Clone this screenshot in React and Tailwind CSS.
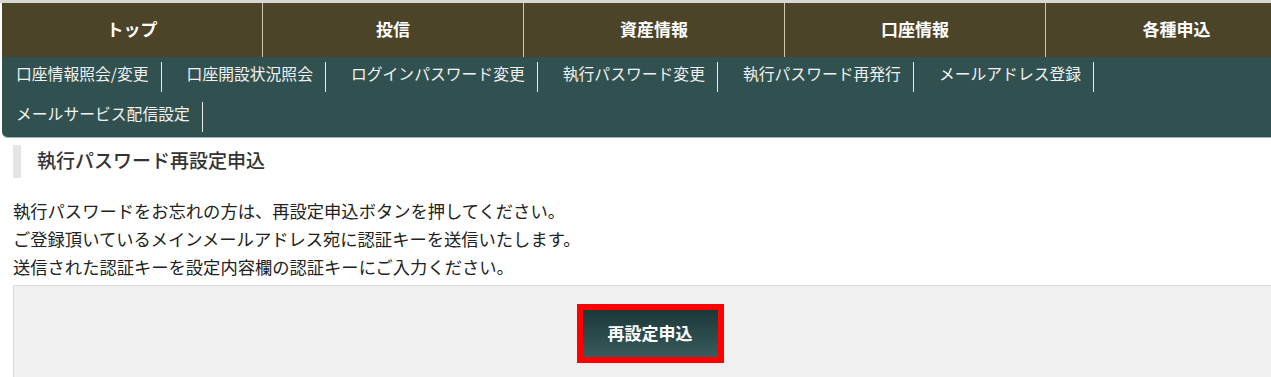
import React from 'react';

const topMenu = ['トップ', '投信', '資産情報', '口座情報', '各種申込'];

const subRows = [
  ['口座情報照会/変更', '口座開設状況照会', 'ログインパスワード変更', '執行パスワード変更', '執行パスワード再発行', 'メールアドレス登録'],
  ['メールサービス配信設定'],
];

const SubItem = ({ label }) => (
  <div className="flex items-center">
    <span className="px-[12px] pb-[6px] text-[15.8px] text-[#f2f2f2] whitespace-nowrap">{label}</span>
    <span className="h-[30px] w-px bg-[#e6ecec]" />
  </div>
);

const App = () => {
  return (
    <div className="w-[1271px] h-[377px] overflow-hidden bg-white font-['Noto_Sans_CJK_JP','Noto_Sans',sans-serif] border-t-[3px] border-[#d8d8d2]">
      {/* Global nav */}
      <div className="ml-[2px] w-[1305px]">
        <div className="flex h-[54px] bg-[#4b4429]">
          {topMenu.map((item, i) => (
            <div
              key={item}
              className={`w-[261px] flex items-center justify-center text-[17px] font-bold text-white ${i < topMenu.length - 1 ? 'border-r border-[#cdc6b0]' : ''}`}
            >
              <span className="pb-[2px]">{item}</span>
            </div>
          ))}
        </div>
        <div className="bg-[#30514f] rounded-bl-[6px] border-b border-[#9fb3b3] pl-[2px]">
          {subRows.map((row, r) => (
            <div key={r} className="flex h-[40px] items-center gap-[13px]">
              {row.map(label => (
                <SubItem key={label} label={label} />
              ))}
            </div>
          ))}
        </div>
      </div>

      {/* Content */}
      <div className="px-[13px]">
        <div className="mt-[7px] flex items-center h-[33px] border-l-[8px] border-[#e4e4e4] pl-[16px]">
          <h2 className="text-[19px] font-medium text-[#333333] pb-[2px]">執行パスワード再設定申込</h2>
        </div>

        <div className="mt-[19px] text-[17.3px] leading-[28px] text-[#222222]">
          <p>執行パスワードをお忘れの方は、再設定申込ボタンを押してください。</p>
          <p>ご登録頂いているメインメールアドレス宛に認証キーを送信いたします。</p>
          <p>送信された認証キーを設定内容欄の認証キーにご入力ください。</p>
        </div>

        <div className="mt-[4px] w-[1273px] h-[100px] bg-[#f0f0f0] border-t border-l border-[#d9d9d9] pt-[18px] flex justify-center">
          <div className="h-fit border-[6px] border-[#ff0000]">
            <button className="w-[135px] h-[47px] flex items-center justify-center bg-linear-to-b from-[#1c3838] to-[#395c5c] text-white text-[17px] font-bold">
              <span className="pb-[2px]">再設定申込</span>
            </button>
          </div>
        </div>
      </div>
    </div>
  );
};

export default App;
